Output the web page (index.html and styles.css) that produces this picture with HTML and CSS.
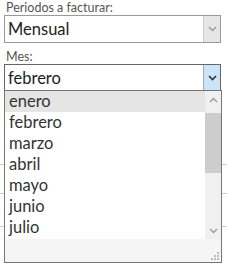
FILE: index.html
```html
<!DOCTYPE html>
<html lang="es">
<head>
    <meta charset="UTF-8">
    <meta name="viewport" content="width=device-width, initial-scale=1.0">
    <title>Periodos</title>
    <link rel="stylesheet" href="styles.css">
</head>
<body>
    <div class="form">
        <label class="label">Periodos a facturar:</label>
        <div class="select">
            <span class="value">Mensual</span>
            <span class="arrow">
                <svg width="9" height="6" viewBox="0 0 9 6"><path d="M1 1 L4.5 4.5 L8 1" fill="none" stroke="#999" stroke-width="1.4"/></svg>
            </span>
        </div>

        <label class="label">Mes:</label>
        <div class="select focused">
            <span class="value">febrero</span>
            <span class="arrow">
                <svg width="9" height="6" viewBox="0 0 9 6"><path d="M1 1 L4.5 4.5 L8 1" fill="none" stroke="#333" stroke-width="1.6"/></svg>
            </span>
        </div>
    </div>

    <div class="rows">
        <div class="row first"></div>
        <div class="row second"></div>
        <div class="row third"></div>
    </div>

    <div class="dropdown">
        <div class="list">
            <ul class="options">
                <li class="selected">enero</li>
                <li>febrero</li>
                <li>marzo</li>
                <li>abril</li>
                <li>mayo</li>
                <li>junio</li>
                <li>julio</li>
            </ul>
            <div class="scrollbar">
                <span class="scroll-btn">
                    <svg width="9" height="6" viewBox="0 0 9 6"><path d="M1 5 L4.5 1.5 L8 5" fill="none" stroke="#999" stroke-width="1.4"/></svg>
                </span>
                <span class="thumb"></span>
                <span class="track"></span>
                <span class="scroll-btn">
                    <svg width="9" height="6" viewBox="0 0 9 6"><path d="M1 1 L4.5 4.5 L8 1" fill="none" stroke="#999" stroke-width="1.4"/></svg>
                </span>
            </div>
        </div>
        <div class="footer">
            <svg class="grip" width="8" height="8" viewBox="0 0 8 8">
                <rect x="6" y="0" width="2" height="2" fill="#bbb"/>
                <rect x="3" y="3" width="2" height="2" fill="#bbb"/>
                <rect x="6" y="3" width="2" height="2" fill="#bbb"/>
                <rect x="0" y="6" width="2" height="2" fill="#bbb"/>
                <rect x="3" y="6" width="2" height="2" fill="#bbb"/>
                <rect x="6" y="6" width="2" height="2" fill="#bbb"/>
            </svg>
        </div>
    </div>
</body>
</html>
```

FILE: styles.css
```css
body {
    font-family: 'Lato', 'Open Sans', sans-serif;
    margin: 0;
    padding: 0;
    background: white;
    color: #333;
    position: relative;
    width: 227px;
    height: 265px;
    overflow: hidden;
}

.form {
    padding: 1px 6px 0 4px;
    display: flex;
    flex-direction: column;
}

.label {
    font-size: 12.5px;
    line-height: 14px;
    color: #555;
    padding-left: 2px;
}

.select {
    display: flex;
    height: 26px;
    border: 1px solid #999;
    background: white;
    margin-bottom: 7px;
}

.select.focused {
    border-color: #666;
}

.value {
    flex: 1;
    font-size: 16.5px;
    line-height: 27px;
    padding-left: 3px;
    color: #222;
}

.arrow {
    width: 16px;
    display: flex;
    align-items: center;
    justify-content: center;
    background: #e6e6e6;
    border-left: 1px solid #ccc;
}

.focused .arrow {
    background: #cce4f7;
    border-left-color: #aaa;
}

.row {
    border-bottom: 1px solid #ccc;
}

.row.first {
    height: 65px;
}

.row.second {
    height: 28px;
}

.row.third {
    height: 32px;
}

.dropdown {
    position: absolute;
    top: 90px;
    left: 4px;
    width: 216px;
    height: 171px;
    border: 1px solid #767676;
    background: white;
    display: flex;
    flex-direction: column;
}

.list {
    display: flex;
    height: 148px;
}

.options {
    flex: 1;
    list-style: none;
    margin: 0;
    padding: 0;
}

.options li {
    height: 21px;
    line-height: 21px;
    font-size: 16.5px;
    padding-left: 4px;
    color: #333;
}

.options li.selected {
    background: #e5e5e5;
}

.scrollbar {
    width: 16px;
    display: flex;
    flex-direction: column;
    background: #f0f0f0;
}

.scroll-btn {
    height: 17px;
    display: flex;
    align-items: center;
    justify-content: center;
}

.thumb {
    height: 60px;
    margin-top: 5px;
    background: #cdcdcd;
}

.track {
    flex: 1;
}

.footer {
    flex: 1;
    background: #f5f5f5;
    position: relative;
}

.grip {
    position: absolute;
    right: 2px;
    bottom: 2px;
}
```
